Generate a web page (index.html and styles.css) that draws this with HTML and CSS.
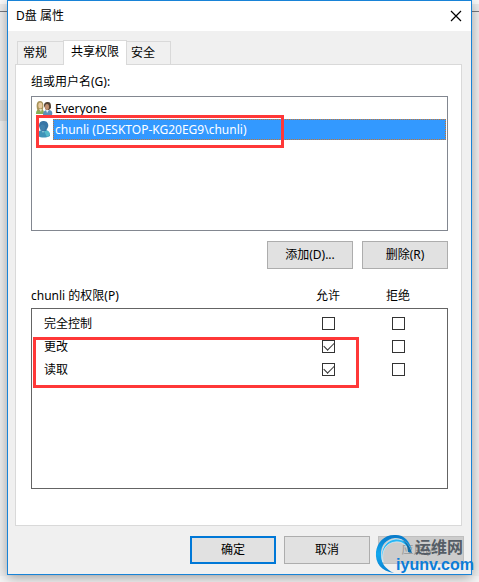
FILE: index.html
```html
<!DOCTYPE html>
<html lang="zh-CN">
  <head>
    <meta charset="utf-8" />
    <title>D盘 属性</title>
    <link rel="stylesheet" href="styles.css">
  </head>
  <body>
    <div class="backdrop">
      <div class="backdrop-bar"></div>
      <div class="backdrop-row"></div>
    </div>
    <div class="window">
      <header class="titlebar">
        <h1>D盘 属性</h1>
        <button type="button" class="close" aria-label="关闭">
          <svg width="12" height="12" viewBox="0 0 12 12">
            <path d="M1 1L11 11M11 1L1 11" stroke="#000" stroke-width="1.2" fill="none" />
          </svg>
        </button>
      </header>
      <nav class="tabs">
        <button type="button" class="tab">常规</button>
        <button type="button" class="tab active">共享权限</button>
        <button type="button" class="tab">安全</button>
      </nav>
      <main class="panel">
        <h2 class="label">组或用户名(G):</h2>
        <ul class="users">
          <li class="user">
            <svg width="17" height="16" viewBox="0 0 17 16">
              <path d="M0 13C0 9 2 8 4 8C7 8 8 9 8 13Z" fill="#86ad57" />
              <path d="M1 8C0 3 1 0 4 0C7 0 8 3 7 8L6 10H2Z" fill="#a8935a" />
              <ellipse cx="4.3" cy="4.5" rx="2" ry="3" fill="#e9cba0" />
              <path d="M3 8L5 11L6 8Z" fill="#dbe5c0" />
              <path d="M7 14C7 10 9 9 12 9C15 9 17 10 16 14Z" fill="#5b8fb8" />
              <path d="M8 5C8 2 9 1 12 1C15 1 15 4 15 7L13 9H10Z" fill="#534335" />
              <ellipse cx="11" cy="6" rx="2" ry="3" fill="#c29070" />
              <path d="M10 9L11 12L13 9Z" fill="#e4edf3" />
            </svg>
            <span class="user-name">Everyone</span>
          </li>
          <li class="user selected">
            <svg width="17" height="17" viewBox="0 0 17 17">
              <path d="M2 15C1 10 4 9 8 9C12 9 14 11 14 15C10 17 5 17 2 15Z" fill="#3f93b8" />
              <path d="M8 10L11 16L14 14C14 11 12 10 10 9Z" fill="#55bacb" />
              <path d="M3 5C3 1 5 0 8 0C11 0 13 3 12 6L10 10H6L4 8Z" fill="#3875a5" />
              <ellipse cx="6.5" cy="6.5" rx="2.5" ry="3" fill="#4382ae" />
              <path d="M6 10L7 12L8 10Z" fill="#9ecbdc" />
            </svg>
            <span class="user-name">chunli (DESKTOP-KG20EG9\chunli)</span>
          </li>
          <li class="mark mark-user" aria-hidden="true"></li>
        </ul>
        <div class="actions">
          <button type="button" class="btn">添加(D)...</button>
          <button type="button" class="btn">删除(R)</button>
        </div>
        <div class="perm-head">
          <h2 class="label">chunli 的权限(P)</h2>
          <span id="allow">允许</span>
          <span id="deny">拒绝</span>
        </div>
        <div class="perm-box">
          <table class="perms">
            <tr>
              <th scope="row" id="full">完全控制</th>
              <td><input type="checkbox" aria-labelledby="full allow" /></td>
              <td><input type="checkbox" aria-labelledby="full deny" /></td>
            </tr>
            <tr>
              <th scope="row" id="change">更改</th>
              <td><input type="checkbox" aria-labelledby="change allow" checked /></td>
              <td><input type="checkbox" aria-labelledby="change deny" /></td>
            </tr>
            <tr>
              <th scope="row" id="read">读取</th>
              <td><input type="checkbox" aria-labelledby="read allow" checked /></td>
              <td><input type="checkbox" aria-labelledby="read deny" /></td>
            </tr>
          </table>
          <div class="mark mark-perms"></div>
        </div>
      </main>
      <footer class="footer">
        <button type="button" class="btn primary">确定</button>
        <button type="button" class="btn">取消</button>
        <button type="button" class="btn" disabled>应用(A)</button>
      </footer>
      <div class="watermark">
        <svg width="40" height="40" viewBox="0 0 40 40">
          <defs>
            <linearGradient id="swirl" x1="0" y1="0" x2="0" y2="1">
              <stop offset="0" stop-color="#0879c8" />
              <stop offset="0.5" stop-color="#12a8ee" />
              <stop offset="1" stop-color="#0a7fd0" />
            </linearGradient>
          </defs>
          <path d="M19 39C6 37 0 29 1 18C2 8 10 0 21 1C29 1 35 7 37 17C33 8 27 4 20 4C11 5 6 11 6 20C6 29 10 35 19 39Z" fill="url(#swirl)" />
          <path d="M8 28C4 17 10 6 21 5C29 5 34 10 36 18C31 10 26 7 20 8C11 9 6 17 8 28Z" fill="#28b5f3" stroke="#e8f5fc" stroke-width="0.6" />
          <path d="M27 6C32 8 35 12 37 19L33 18C33 13 31 9 27 6Z" fill="#0f6ca8" />
        </svg>
        <div class="watermark-text">
          <span class="wm-name">运维网</span>
          <span class="wm-site">iyunv.com</span>
        </div>
      </div>
    </div>
  </body>
</html>
```
FILE: styles.css
```css
* {
  box-sizing: border-box;
}

body {
  margin: 0;
  padding: 0 7px 7px;
  background-color: #f6f6f6;
  font-family: "Noto Sans", "Noto Sans CJK SC", sans-serif;
  font-size: 12px;
  line-height: 16px;
  color: #000;
}

h1,
h2 {
  margin: 0;
  font-size: 12px;
  font-weight: normal;
}

button {
  font: inherit;
  color: inherit;
}

/* window lying behind the dialog */
.backdrop {
  position: absolute;
  top: 0;
  left: 0;
  right: 0;
  z-index: -1;
  height: 576px;
  background-color: #f0f0f0;
}

.backdrop-bar {
  height: 12px;
  border-top: 4px solid #fafafa;
  border-bottom: 1px solid #777a80;
  background-color: #ededed;
}

.backdrop-row {
  width: 8px;
  height: 21px;
  margin-top: 88px;
  background-color: #dedede;
}

.window {
  position: relative;
  border: 1px solid #1883d7;
  background-color: #f0f0f0;
  box-shadow: 0 3px 12px rgba(0, 0, 0, 0.35);
}

.titlebar {
  display: flex;
  justify-content: space-between;
  align-items: center;
  height: 30px;
  padding: 0 9px 0 8px;
  background-color: #fff;
}

.close {
  display: flex;
  padding: 0;
  border: none;
  background: none;
}

.tabs {
  display: flex;
  align-items: flex-end;
  padding: 9px 9px 0;
}

.tab {
  height: 23px;
  padding: 0 16px 0 5px;
  border: 1px solid #d9d9d9;
  border-bottom: none;
  background-color: #f0f0f0;
}

.tab + .tab {
  border-left: none;
}

.tab.active {
  position: relative;
  height: 25px;
  margin-bottom: -1px;
  padding: 0 7px 3px;
  border-left: 1px solid #d9d9d9;
  background-color: #fff;
}

.tab:first-child {
  border-right: none;
}

.tab:last-child {
  padding: 0 15px 0 4px;
}

.panel {
  margin: 0 9px 0 7px;
  padding: 9px 13px 36px 15px;
  border: 1px solid #d9d9d9;
  background-color: #fff;
}

.label {
  line-height: 16px;
}

.users {
  position: relative;
  height: 135px;
  margin: 6px 0 10px;
  padding: 1px;
  border: 1px solid #828790;
  list-style: none;
}

.user {
  display: flex;
  align-items: center;
  height: 21px;
  padding-left: 3px;
}

.user-name {
  flex: 1;
  padding: 0 1px;
  border: 1px solid transparent;
  line-height: 19px;
}

.selected .user-name {
  border: 1px dotted #c8752f;
  background-color: #3399ff;
  color: #fff;
}

.mark {
  position: absolute;
  border: 3px solid #ff3838;
}

.mark-user {
  top: 18px;
  left: 4px;
  width: 248px;
  height: 33px;
}

.actions {
  display: flex;
  justify-content: flex-end;
  gap: 9px;
}

.btn {
  width: 86px;
  height: 28px;
  padding: 0;
  border: 1px solid #adadad;
  background-color: #e1e1e1;
}

.btn.primary {
  border: 2px solid #0078d7;
}

.btn:disabled {
  border-color: #bfbfbf;
  background-color: #cccccc;
  color: #999;
}

.perm-head {
  display: grid;
  grid-template-columns: 1fr 70px 70px;
  margin-top: 19px;
  padding-right: 15px;
}

.perm-head span {
  text-align: center;
}

.perm-box {
  position: relative;
  height: 181px;
  margin-top: 4px;
  padding: 3px 14px 0 12px;
  border: 1px solid #646464;
}

.perms {
  width: 100%;
  border-collapse: collapse;
  table-layout: fixed;
}

.perms th,
.perms td {
  height: 23px;
  padding: 0;
  font-weight: normal;
  text-align: left;
}

.perms td {
  width: 70px;
}

.perms input {
  display: block;
  appearance: none;
  width: 13px;
  height: 13px;
  margin: 0 auto;
  border: 1px solid #333;
  background-color: #fff;
}

.perms input:checked::before {
  content: "";
  display: block;
  width: 9px;
  height: 5px;
  margin: 2px 0 0 1px;
  border: solid #333;
  border-width: 0 0 1px 1px;
  transform: translateY(-1px) rotate(-45deg);
}

.mark-perms {
  top: 28px;
  left: 1px;
  width: 326px;
  height: 51px;
}

.footer {
  display: flex;
  justify-content: flex-end;
  gap: 8px;
  padding: 10px 7px;
}

.watermark {
  position: absolute;
  right: -3px;
  bottom: 0;
  display: flex;
}

.watermark-text {
  display: flex;
  flex-direction: column;
  margin-left: -19px;
  padding-top: 4px;
  font-weight: bold;
}

.wm-name {
  padding-left: 19px;
  font-size: 16px;
  line-height: 18px;
  color: #555d66;
}

.wm-site {
  font-family: "Liberation Sans", Arial, sans-serif;
  font-size: 16px;
  line-height: 18px;
  color: #0b7dd8;
}
```
